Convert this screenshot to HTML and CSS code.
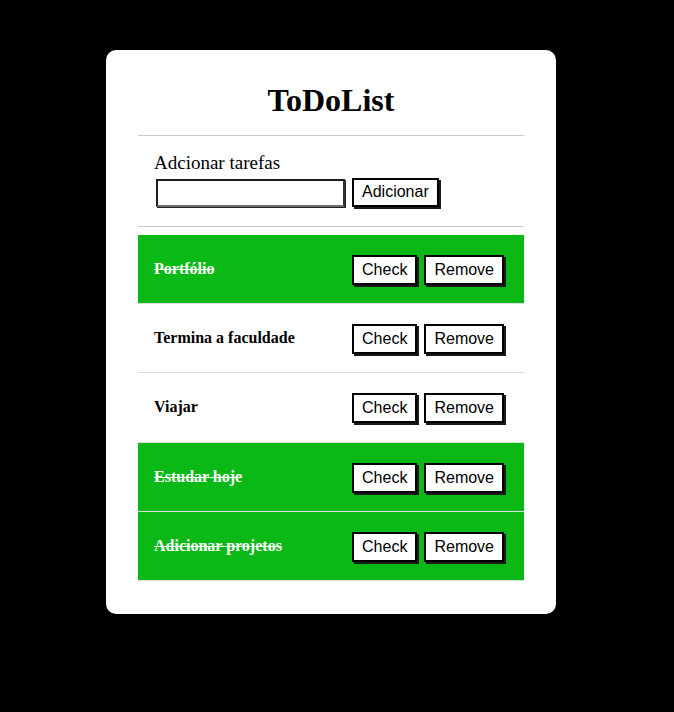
FILE: index.html
```html
<!DOCTYPE html>
<html lang="pt">
<head>
<meta charset="utf-8">
<title>ToDoList</title>
<link rel="stylesheet" href="styles.css">
</head>
<body>
<main class="card">
  <h1 class="title">ToDoList</h1>
  <section class="add">
    <label class="add-label" for="task">Adcionar tarefas</label>
    <div class="add-row">
      <input id="task" class="add-input" type="text">
      <button class="btn">Adicionar</button>
    </div>
  </section>
  <ul class="list">
    <li class="item done"><span class="item-text">Portfólio</span><div class="actions"><button class="btn">Check</button><button class="btn">Remove</button></div></li>
    <li class="item"><span class="item-text">Termina a faculdade</span><div class="actions"><button class="btn">Check</button><button class="btn">Remove</button></div></li>
    <li class="item"><span class="item-text">Viajar</span><div class="actions"><button class="btn">Check</button><button class="btn">Remove</button></div></li>
    <li class="item done"><span class="item-text">Estudar hoje</span><div class="actions"><button class="btn">Check</button><button class="btn">Remove</button></div></li>
    <li class="item done"><span class="item-text">Adicionar projetos</span><div class="actions"><button class="btn">Check</button><button class="btn">Remove</button></div></li>
  </ul>
</main>
</body>
</html>
```
FILE: styles.css
```css
html, body {
  margin: 0;
  padding: 0;
  background: #000;
}
body {
  font-family: "Liberation Serif", "Times New Roman", serif;
  color: #000;
  padding-top: 50px;
  min-height: 712px;
  box-sizing: border-box;
}
.card {
  width: 450px;
  box-sizing: border-box;
  margin-left: 106px;
  background: #fff;
  border-radius: 10px;
  padding: 32px 32px 33px;
}
.title {
  margin: 0 0 16px;
  text-align: center;
  font-size: 32px;
  line-height: 37px;
  font-weight: bold;
}
.add {
  border-top: 1px solid #ccc;
  border-bottom: 1px solid #ccc;
  padding: 16px 16px 19px;
  margin-bottom: 8px;
}
.add-label {
  display: block;
  font-size: 19px;
  line-height: 22px;
}
.add-row {
  display: flex;
  align-items: center;
  gap: 7px;
  margin-top: 4px;
  padding-left: 2px;
}
.add-input {
  width: 189px;
  height: 28px;
  box-sizing: border-box;
  margin: 0;
  border: 2px solid #1c1c1c;
  border-bottom-color: #6e6e6e;
  border-right-color: #333;
  box-shadow: 1px 1px 0 #222;
  background: #fff;
  font-size: 14px;
}
.btn {
  font-family: "Liberation Sans", Arial, sans-serif;
  font-size: 16px;
  line-height: 18px;
  color: #000;
  background: #fff;
  border: 2px solid #000;
  box-shadow: 2px 2px 0 #1a1a1a;
  padding: 3px 8px 4px;
  margin: 0;
  cursor: pointer;
}
.list {
  list-style: none;
  margin: 0;
  padding: 0;
}
.item {
  display: flex;
  align-items: center;
  justify-content: space-between;
  height: 68.2px;
  padding: 0 20px 0 16px;
  border-bottom: 1px solid #ddd;
}
.item-text {
  font-size: 16px;
  font-weight: bold;
}
.item.done {
  background: #0ab916;
}
.item.done .item-text {
  color: #fff;
  text-decoration: line-through;
}
.actions {
  display: flex;
  gap: 7px;
  margin-top: 2px;
}
.item .btn {
  padding: 4px 8px 4px;
}
```
